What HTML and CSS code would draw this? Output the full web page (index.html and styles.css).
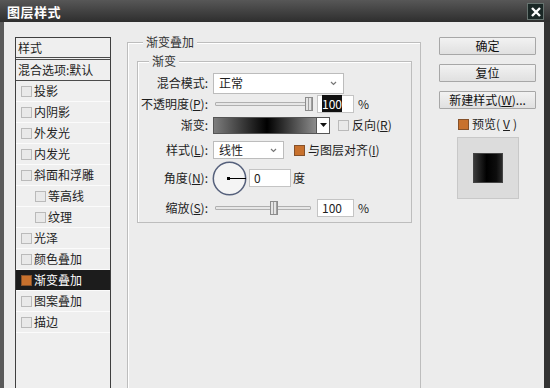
FILE: index.html
```html
<!DOCTYPE html>
<html lang="zh-CN">
<head>
    <meta charset="UTF-8">
    <meta name="viewport" content="width=device-width, initial-scale=1.0">
    <title>图层样式</title>
    <link rel="stylesheet" href="styles.css">
</head>
<body>
<div class="dialog">
    <div class="titlebar">
        <span class="title">图层样式</span>
        <span class="close">
            <svg width="14" height="14" viewBox="0 0 14 14"><path d="M3 3L11 11M11 3L3 11" stroke="#fff" stroke-width="2.4"/></svg>
        </span>
    </div>

    <div class="panel">
        <!-- lista de estilos -->
        <div class="style-list">
            <div class="list-head">样式</div>
            <div class="list-blend">混合选项:默认</div>
            <div class="list-item"><span class="check"></span>投影</div>
            <div class="list-item"><span class="check"></span>内阴影</div>
            <div class="list-item"><span class="check"></span>外发光</div>
            <div class="list-item"><span class="check"></span>内发光</div>
            <div class="list-item"><span class="check"></span>斜面和浮雕</div>
            <div class="list-item sub"><span class="check"></span>等高线</div>
            <div class="list-item sub"><span class="check"></span>纹理</div>
            <div class="list-item"><span class="check"></span>光泽</div>
            <div class="list-item"><span class="check"></span>颜色叠加</div>
            <div class="list-item active"><span class="check on"></span>渐变叠加</div>
            <div class="list-item"><span class="check"></span>图案叠加</div>
            <div class="list-item"><span class="check"></span>描边</div>
        </div>

        <!-- opciones -->
        <fieldset class="group outer">
            <legend>渐变叠加</legend>
            <fieldset class="group inner">
                <legend>渐变</legend>

                <div class="row r-mode">
                    <span class="lbl">混合模式:</span>
                    <div class="select mode">正常
                        <svg width="7" height="5" viewBox="0 0 7 5"><path d="M1 1L3.5 3.5L6 1" fill="none" stroke="#777" stroke-width="1.2"/></svg>
                    </div>
                </div>

                <div class="row r-opacity">
                    <span class="lbl">不透明度(<u>P</u>):</span>
                    <div class="slider"><span class="track"></span><span class="thumb" style="left:92px"></span></div>
                    <div class="field"><span class="sel">100</span></div>
                    <span class="unit">%</span>
                </div>

                <div class="row r-grad">
                    <span class="lbl">渐变:</span>
                    <div class="grad"></div>
                    <div class="grad-drop">
                        <svg width="7" height="4" viewBox="0 0 7 4"><path d="M0 0H7L3.5 4Z" fill="#111"/></svg>
                    </div>
                    <span class="check opt"></span>
                    <span class="opt-text">反向(<u>R</u>)</span>
                </div>

                <div class="row r-style">
                    <span class="lbl">样式(<u>L</u>):</span>
                    <div class="select kind">线性
                        <svg width="7" height="5" viewBox="0 0 7 5"><path d="M1 1L3.5 3.5L6 1" fill="none" stroke="#777" stroke-width="1.2"/></svg>
                    </div>
                    <span class="check on align"></span>
                    <span class="opt-text">与图层对齐(<u>I</u>)</span>
                </div>

                <div class="row r-angle">
                    <span class="lbl">角度(<u>N</u>):</span>
                    <svg class="dial" width="35" height="35" viewBox="0 0 35 35">
                        <circle cx="17.5" cy="17.5" r="16.2" fill="#f4f4f4" stroke="#56617c" stroke-width="1.5"/>
                        <line x1="17" y1="17.5" x2="34" y2="17.5" stroke="#000" stroke-width="1"/>
                        <rect x="15" y="16" width="3" height="3" fill="#000"/>
                    </svg>
                    <div class="field angle">0</div>
                    <span class="unit deg">度</span>
                </div>

                <div class="row r-scale">
                    <span class="lbl">缩放(<u>S</u>):</span>
                    <div class="slider"><span class="track"></span><span class="thumb" style="left:57px"></span></div>
                    <div class="field">100</div>
                    <span class="unit">%</span>
                </div>
            </fieldset>
        </fieldset>

        <!-- botones -->
        <div class="actions">
            <button class="btn">确定</button>
            <button class="btn">复位</button>
            <button class="btn last">新建样式(<u>W</u>)...</button>
            <div class="preview-toggle"><span class="check on"></span>预览(<u>V</u>)</div>
            <div class="preview"><div class="swatch"></div></div>
        </div>
    </div>
</div>
</body>
</html>
```

FILE: styles.css
```css
/* Estilos comunes */
* {
    box-sizing: border-box;
}

body {
    margin: 0;
    font-family: "Noto Sans CJK SC", "Noto Sans", sans-serif;
    font-size: 12px;
    line-height: 16px;
    color: #1e1e1e;
    background-color: #3a3a3a;
}

u {
    text-decoration-thickness: 1px;
    text-underline-offset: 1px;
}

.dialog {
    width: 550px;
    height: 388px;
    display: flex;
    flex-direction: column;
    overflow: hidden;
}

/* Barra de título */
.titlebar {
    height: 22px;
    flex: none;
    display: flex;
    align-items: center;
    justify-content: space-between;
    padding: 1px 6px 0 7px;
    background: linear-gradient(#575757, #2e2e2e);
}

.title {
    color: #fff;
    font-weight: bold;
    font-size: 13px;
    letter-spacing: 0.5px;
}

.close {
    width: 17px;
    height: 17px;
    display: flex;
    align-items: center;
    justify-content: center;
    background-color: #1a2725;
    border: 1px solid #66736f;
}

/* Cuerpo */
.panel {
    flex: 1;
    display: flex;
    align-items: flex-start;
    padding: 15px 0 0 11px;
    background-color: #ececec;
    border-left: 4px solid #5a5a5a;
    border-right: 6px solid #333;
    overflow: hidden;
}

/* Lista de estilos */
.style-list {
    width: 96px;
    height: 360px;
    flex: none;
    margin-right: 16px;
    border: 1px solid #3f3f3f;
    background-color: #efefef;
}

.list-head {
    height: 22px;
    line-height: 19px;
    padding-left: 2px;
    border-bottom: 3px double #4b4b4b;
}

.list-blend {
    height: 21px;
    line-height: 20px;
    padding-left: 2px;
    border-bottom: 1px solid #4b4b4b;
}

.list-item {
    height: 21px;
    display: flex;
    align-items: center;
    gap: 2px;
    padding-left: 5px;
    border-bottom: 1px solid #fbfbfb;
}

.list-item.sub {
    padding-left: 19px;
}

.list-item.active {
    background-color: #1c1c1c;
    color: #fff;
}

.check {
    width: 11px;
    height: 11px;
    flex: none;
    border: 1px solid #bababa;
    background-color: #e9e9e9;
}

.check.on {
    background-color: #c8712d;
    border-color: #85512a;
}

/* Grupos */
fieldset.group {
    margin: 0;
    min-width: 0;
    border: 1px solid #bdbdbd;
    box-shadow: inset 1px 1px 0 #fff;
}

legend {
    padding: 0 3px;
    line-height: 16px;
    color: #333;
    background-color: #ececec;
}

.outer {
    width: 294px;
    height: 380px;
    flex: none;
    margin-top: -3px !important;
    margin-right: 18px !important;
    padding: 3px 8px 0 9px;
}

.outer > legend {
    margin-left: 6px;
}

.inner {
    padding: 3px 0 5px 0;
}

.inner > legend {
    margin-left: 11px;
}

/* Filas */
.row {
    display: flex;
    align-items: center;
    height: 18px;
}

.r-mode {
    height: 22px;
}

.r-opacity {
    margin-top: 1px;
}

.r-grad {
    margin-top: 3px;
}

.r-style {
    margin-top: 7px;
}

.r-angle {
    height: 34px;
    margin-top: 2px;
}

.r-scale {
    margin-top: 4px;
}

.lbl {
    width: 70px;
    flex: none;
    margin-right: 5px;
    text-align: right;
    white-space: nowrap;
}

.select {
    display: flex;
    align-items: center;
    justify-content: space-between;
    padding: 0 6px 0 5px;
    border: 1px solid #bcbcbc;
    background-color: #fff;
}

.select.mode {
    width: 131px;
    height: 21px;
}

.select.kind {
    width: 71px;
    height: 18px;
}

.slider {
    position: relative;
    width: 100px;
    height: 14px;
    flex: none;
}

.track {
    position: absolute;
    left: 2px;
    right: 2px;
    top: 5px;
    height: 4px;
    border: 1px solid #b0b0b0;
    border-radius: 1px;
    background-color: #e6e6e6;
}

.thumb {
    position: absolute;
    top: 0;
    width: 8px;
    height: 14px;
    border: 1px solid #8c8c8c;
    background: repeating-linear-gradient(to right, #e4e4e4 0 2px, #a0a0a0 2px 3px);
}

.field {
    width: 37px;
    height: 18px;
    margin-left: 4px;
    padding-left: 4px;
    line-height: 16px;
    border: 1px solid #c4c4c4;
    background-color: #fff;
}

.field.angle {
    width: 42px;
    margin-left: 2px;
}

.sel {
    background-color: #111;
    color: #fff;
}

.unit {
    margin-left: 4px;
}

.unit.deg {
    margin-left: 2px;
}

.grad {
    width: 104px;
    height: 17px;
    border: 1px solid #555;
    background: linear-gradient(to right, #7d7d7d, #000 52%, #8c8c8c);
}

.grad-drop {
    width: 13px;
    height: 17px;
    display: flex;
    align-items: center;
    justify-content: center;
    border: 1px solid #555;
    border-left: none;
    background-color: #fff;
}

.check.opt {
    margin-left: 8px;
}

.check.align {
    margin-left: 10px;
}

.opt-text {
    margin-left: 3px;
    white-space: nowrap;
}

.dial {
    flex: none;
    margin-left: -1px;
}

/* Botones */
.actions {
    width: 97px;
    flex: none;
    display: flex;
    flex-direction: column;
}

.btn {
    height: 18px;
    margin: 0 0 9px 0;
    padding: 0;
    font-family: inherit;
    font-size: 12px;
    line-height: 16px;
    color: #111;
    border: 1px solid #a7a7a7;
    border-radius: 1px;
    background: linear-gradient(#f2f2f2, #e0e0e0);
}

.btn.last {
    margin-bottom: 7px;
}

.preview-toggle {
    height: 16px;
    display: flex;
    align-items: center;
    justify-content: center;
    gap: 3px;
}

.preview {
    width: 62px;
    height: 62px;
    margin: 5px auto 0;
    display: flex;
    align-items: center;
    justify-content: center;
    border: 1px solid #c8c8c8;
    background-color: #dcdcdc;
}

.swatch {
    width: 30px;
    height: 30px;
    border: 1px solid #444;
    background: linear-gradient(to right, #3a3a3a, #000 45%, #0d0d0d 80%, #2a2a2a);
}
```
